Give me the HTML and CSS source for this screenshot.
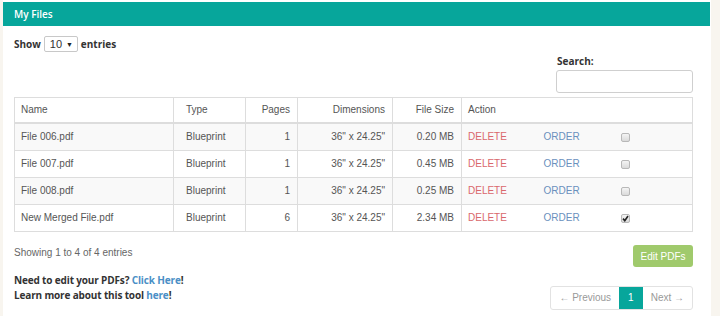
FILE: index.html
```html
<!DOCTYPE html>
<html lang="en">
<head>
    <meta charset="UTF-8">
    <title>My Files</title>
    <link rel="stylesheet" href="styles.css">
</head>
<body>
    <div class="panel">
        <div class="panel-heading">My Files</div>

        <div class="panel-body">
            <!-- Table controls -->
            <div class="dt-length">
                Show
                <span class="select">10 <span class="caret">&#9660;</span></span>
                entries
            </div>
            <div class="dt-filter">
                <label class="filter-label">Search:</label>
                <span class="filter-input"></span>
            </div>

            <table class="files">
                <colgroup>
                    <col class="w-name">
                    <col class="w-type">
                    <col class="w-pages">
                    <col class="w-dim">
                    <col class="w-size">
                    <col class="w-del">
                    <col class="w-order">
                    <col class="w-check">
                </colgroup>
                <thead>
                    <tr>
                        <th>Name</th>
                        <th class="c-type">Type</th>
                        <th class="num">Pages</th>
                        <th class="num">Dimensions</th>
                        <th class="num">File Size</th>
                        <th colspan="3">Action</th>
                    </tr>
                </thead>
                <tbody>
                    <tr>
                        <td>File 006.pdf</td>
                        <td class="c-type">Blueprint</td>
                        <td class="num">1</td>
                        <td class="num">36" x 24.25"</td>
                        <td class="num">0.20 MB</td>
                        <td><a class="delete">DELETE</a></td>
                        <td class="c-order"><a class="order">ORDER</a></td>
                        <td class="c-check"><span class="chk"></span></td>
                    </tr>
                    <tr>
                        <td>File 007.pdf</td>
                        <td class="c-type">Blueprint</td>
                        <td class="num">1</td>
                        <td class="num">36" x 24.25"</td>
                        <td class="num">0.45 MB</td>
                        <td><a class="delete">DELETE</a></td>
                        <td class="c-order"><a class="order">ORDER</a></td>
                        <td class="c-check"><span class="chk"></span></td>
                    </tr>
                    <tr>
                        <td>File 008.pdf</td>
                        <td class="c-type">Blueprint</td>
                        <td class="num">1</td>
                        <td class="num">36" x 24.25"</td>
                        <td class="num">0.25 MB</td>
                        <td><a class="delete">DELETE</a></td>
                        <td class="c-order"><a class="order">ORDER</a></td>
                        <td class="c-check"><span class="chk"></span></td>
                    </tr>
                    <tr>
                        <td>New Merged File.pdf</td>
                        <td class="c-type">Blueprint</td>
                        <td class="num">6</td>
                        <td class="num">36" x 24.25"</td>
                        <td class="num">2.34 MB</td>
                        <td><a class="delete">DELETE</a></td>
                        <td class="c-order"><a class="order">ORDER</a></td>
                        <td class="c-check">
                            <span class="chk checked">
                                <svg width="7" height="7" viewBox="0 0 7 7"><path d="M1 3.6 L2.8 5.6 L6 1" fill="none" stroke="#222" stroke-width="1.6"/></svg>
                            </span>
                        </td>
                    </tr>
                </tbody>
            </table>

            <div class="dt-bottom">
                <div class="dt-info">Showing 1 to 4 of 4 entries</div>
                <button class="btn-edit">Edit PDFs</button>
            </div>

            <div class="dt-footer">
                <div class="notes">
                    <div>Need to edit your PDFs? <a class="link">Click Here</a>!</div>
                    <div>Learn more about this tool <a class="link">here</a>!</div>
                </div>
                <ul class="pagination">
                    <li class="page">&larr; Previous</li>
                    <li class="page active">1</li>
                    <li class="page">Next &rarr;</li>
                </ul>
            </div>
        </div>
    </div>
</body>
</html>
```

FILE: styles.css
```css
body {
    margin: 0;
    padding: 0;
    background-color: #f8f5ef;
    font-family: 'Liberation Sans', Arial, sans-serif;
    font-size: 10px;
    color: #555;
}

/* Panel */
.panel {
    margin-left: 3px;
    width: 708px;
    height: 316px;
    padding-top: 2px;
    box-sizing: border-box;
    background: #ffffff;
}

.panel-heading {
    height: 24px;
    line-height: 24px;
    padding-left: 11px;
    margin-right: 1px;
    background-color: #07a69b;
    color: #ffffff;
    font-family: 'Open Sans', sans-serif;
    font-weight: 600;
    font-size: 10px;
}

.panel-body {
    padding: 0 18px 0 11px;
}

/* Length + filter */
.dt-length {
    display: flex;
    align-items: center;
    gap: 3px;
    height: 16px;
    margin-top: 10px;
    font-family: 'Open Sans', sans-serif;
    font-weight: 700;
    font-size: 10px;
    color: #333;
}

.select {
    display: inline-flex;
    align-items: center;
    justify-content: space-between;
    width: 34px;
    height: 16px;
    padding: 0 4px 0 5px;
    box-sizing: border-box;
    border: 1px solid #c8c8c8;
    border-radius: 2px;
    font-family: 'Liberation Sans', Arial, sans-serif;
    font-weight: 400;
    font-size: 11px;
    color: #333;
}

.caret {
    font-size: 7px;
    color: #222;
}

.dt-filter {
    display: flex;
    flex-direction: column;
    align-items: flex-start;
    margin-left: auto;
    margin-top: 4px;
    width: 137px;
}

.filter-label {
    font-family: 'Open Sans', sans-serif;
    font-weight: 700;
    font-size: 10px;
    color: #333;
    line-height: 11px;
    margin-left: 1px;
}

.filter-input {
    display: block;
    width: 137px;
    height: 23px;
    margin-top: 3px;
    box-sizing: border-box;
    border: 1px solid #cfcfcf;
    border-radius: 3px;
    background: #fff;
}

/* Table */
.files {
    width: 679px;
    margin-top: 4px;
    border-collapse: collapse;
    border: 1px solid #ddd;
    table-layout: fixed;
}

.w-name { width: 159px; }
.w-type { width: 72px; }
.w-pages { width: 52px; }
.w-dim { width: 95px; }
.w-size { width: 69px; }
.w-del { width: 76px; }
.w-order { width: 76px; }
.w-check { width: 79px; }

.files th,
.files td {
    height: 26px;
    padding: 0 6px;
    border-top: 1px solid #ddd;
    text-align: left;
    font-weight: 400;
    white-space: nowrap;
    line-height: 14px;
}

.files th {
    border-bottom: 2px solid #ddd;
    height: 24px;
}

.files th + th,
.files td + td {
    border-left: 1px solid #ddd;
}

.files td.c-order,
.files td.c-check {
    border-left: none;
}

.files tbody tr:nth-child(odd) {
    background-color: #f9f9f9;
}

.files .num {
    text-align: right;
    padding-right: 7px;
}

.files .c-type {
    padding-left: 12px;
}

.delete {
    color: #d9676c;
}

.order {
    color: #6a90bd;
}

.files td.c-check {
    padding-left: 7px;
}

.chk {
    display: inline-flex;
    align-items: center;
    justify-content: center;
    width: 9px;
    height: 9px;
    box-sizing: border-box;
    border: 1px solid #b8b8b8;
    border-radius: 2px;
    background: linear-gradient(#f4f4f4, #dadada);
    vertical-align: middle;
}

/* Bottom */
.dt-bottom {
    display: flex;
    align-items: flex-start;
    justify-content: space-between;
    margin-top: 13px;
}

.dt-info {
    color: #666;
    font-size: 10px;
    line-height: 14px;
    margin-top: 1px;
}

.btn-edit {
    width: 60px;
    height: 22px;
    padding: 0;
    border: none;
    border-radius: 3px;
    background-color: #a0ca6c;
    color: #ffffff;
    font-family: 'Liberation Sans', Arial, sans-serif;
    font-size: 10px;
}

.dt-footer {
    display: flex;
    justify-content: space-between;
    align-items: flex-start;
    margin-top: 6px;
}

.notes {
    font-family: 'Open Sans', sans-serif;
    font-weight: 700;
    font-size: 10px;
    letter-spacing: -0.15px;
    line-height: 15px;
    color: #333;
}

.link {
    color: #4a8fc6;
}

.pagination {
    display: flex;
    list-style: none;
    margin: 13px 0 0 0;
    padding: 0;
    border: 1px solid #e2e2e2;
    border-radius: 3px;
    height: 24px;
    box-sizing: border-box;
}

.page {
    padding: 0 8px;
    line-height: 22px;
    color: #999;
    font-size: 10px;
}

.page + .page {
    border-left: 1px solid #e2e2e2;
}

.page.active {
    background-color: #07a69b;
    color: #ffffff;
    padding: 0 9px;
    border-left: none;
}

.page.active + .page {
    border-left: none;
}
```
